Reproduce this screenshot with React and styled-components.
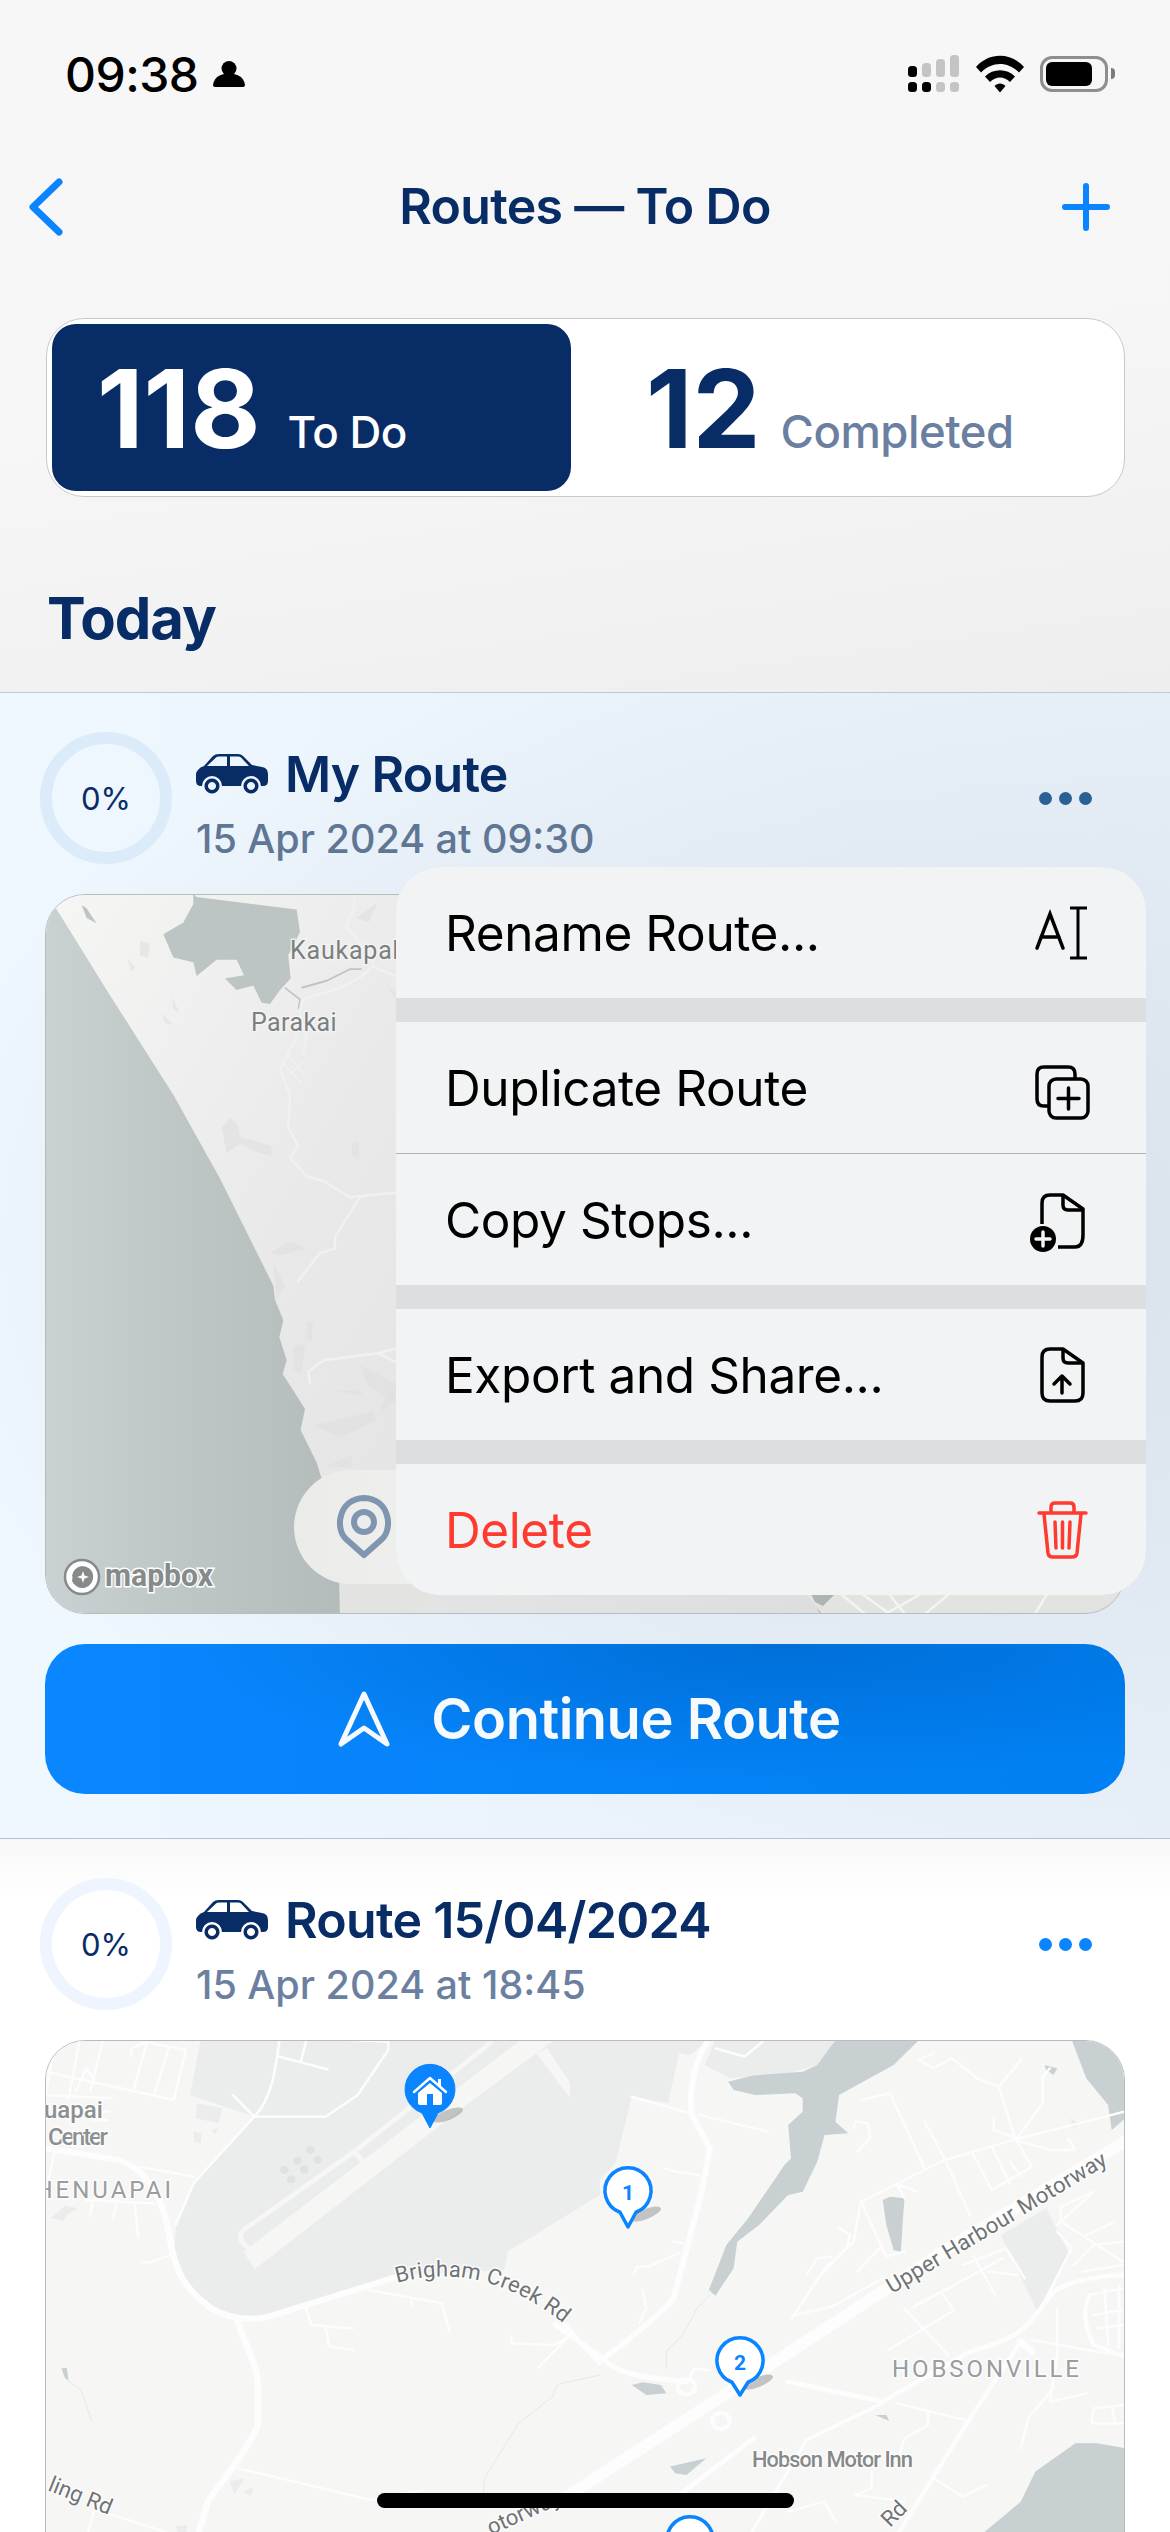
import React from 'react'
import styled, { createGlobalStyle } from 'styled-components'

const NAVY = '#082c66'
const BLUE = '#0a84ff'
const FONT = 'Inter, "Liberation Sans", sans-serif'
const MAP_FONT = 'Roboto, "Liberation Sans", sans-serif'

const GlobalStyle = createGlobalStyle`
  html, body {
    margin: 0;
    padding: 0;
    background: #fff;
  }
  * { box-sizing: border-box; }
`

const Page = styled.div`
  position: relative;
  width: 1170px;
  height: 2532px;
  overflow: hidden;
  font-family: ${FONT};
  background: #fff;
`

const Top = styled.header`
  height: 692px;
  background: linear-gradient(172deg, #f7f7f7 0%, #f6f6f6 55%, #eeeeee 100%);
`

const StatusBar = styled.div`
  height: 148px;
  display: flex;
  align-items: center;
  justify-content: space-between;
  padding: 0 55px 0 65px;
`

const StatusLeft = styled.div`
  display: flex;
  align-items: center;
  gap: 14px;
  font-size: 48px;
  font-weight: 500;
  letter-spacing: -0.5px;
  color: #000;
`

const StatusRight = styled.div`
  display: flex;
  align-items: center;
  gap: 16px;
`

const Battery = styled.div`
  position: relative;
  width: 68px;
  height: 36px;
  padding: 3px;
  border: 3px solid #8e8e8e;
  border-radius: 12px;
  margin-right: 7px;

  &::before {
    content: '';
    display: block;
    width: 46px;
    height: 24px;
    border-radius: 6px;
    background: #000;
  }

  &::after {
    content: '';
    position: absolute;
    right: -10px;
    top: 9px;
    width: 4px;
    height: 11px;
    border-radius: 0 4px 4px 0;
    background: #7a7a7a;
  }
`

const NavBar = styled.nav`
  height: 118px;
  display: grid;
  grid-template-columns: 120px 1fr 88px;
  align-items: center;
  padding: 0 60px 0 28px;
`

const NavTitle = styled.h1`
  margin: 0 0 3px;
  text-align: center;
  font-size: 50px;
  font-weight: 600;
  letter-spacing: -0.7px;
  color: ${NAVY};
`

const NavRight = styled.div`
  display: flex;
  justify-content: flex-end;
`

const Segment = styled.div`
  display: flex;
  width: 1079px;
  height: 179px;
  margin: 52px 0 0 46px;
  padding: 5px;
  background: #fff;
  border: 1px solid #c9c9c9;
  border-radius: 38px;
`

const SegmentItem = styled.div`
  width: ${p => (p.$active ? '519px' : 'auto')};
  flex: ${p => (p.$active ? 'none' : '1')};
  display: flex;
  align-items: baseline;
  gap: ${p => (p.$active ? '27px' : '20px')};
  padding: 0 0 0 ${p => (p.$active ? '45px' : '75px')};
  line-height: 170px;
  border-radius: 24px;
  background: ${p => (p.$active ? NAVY : 'transparent')};
`

const SegmentCount = styled.span`
  font-size: 108px;
  font-weight: 700;
  letter-spacing: 0;
  color: ${p => (p.$active ? '#fff' : NAVY)};
`

const SegmentLabel = styled.span`
  font-size: ${p => (p.$active ? '44px' : '45.5px')};
  font-weight: 500;
  letter-spacing: -0.5px;
  color: ${p => (p.$active ? '#fff' : '#6b7fa0')};
`

const SectionTitle = styled.h2`
  margin: 87px 0 0 47px;
  font-size: 58px;
  line-height: 68px;
  font-weight: 700;
  letter-spacing: -1px;
  color: ${NAVY};
`

const Card = styled.section`
  position: relative;
  padding: 39px 45px 44px;
  border-top: 1px solid ${p => (p.$highlighted ? '#c3c8ce' : '#b9c1d0')};
  background: ${p =>
    p.$highlighted
      ? 'radial-gradient(ellipse 85% 52% at 72% 48%, #d7e0e8 0%, rgba(215,224,232,0) 100%), linear-gradient(90deg, #eff7ff 0%, #e6eef7 100%)'
      : 'linear-gradient(180deg, #f8f8f8 0%, #ffffff 60px)'};
`

const CardHeader = styled.div`
  display: flex;
  align-items: flex-start;
  height: 132px;
`

const Ring = styled.div`
  flex: none;
  width: 132px;
  height: 132px;
  margin-left: -5px;
  display: flex;
  align-items: center;
  justify-content: center;
  border: 12px solid ${p => p.$color};
  border-radius: 50%;
  font-size: 31px;
  color: ${NAVY};
`

const CardTitles = styled.div`
  margin-left: 24px;
  display: flex;
  flex-direction: column;
`

const TitleRow = styled.div`
  display: flex;
  align-items: center;
  gap: 17px;
  height: 60px;
  margin-top: 12px;
`

const CardTitle = styled.h3`
  margin: 0;
  font-size: 50px;
  font-weight: 600;
  letter-spacing: -0.7px;
  color: ${NAVY};
`

const CardDate = styled.div`
  margin-top: 11px;
  font-size: 39.5px;
  line-height: 48px;
  font-weight: 500;
  color: ${p => p.$color};
`

const Dots = styled.div`
  margin: 60px 33px 0 auto;
  display: flex;
  gap: 7px;
`

const Dot = styled.span`
  width: 13px;
  height: 13px;
  border-radius: 50%;
  background: ${p => p.$color};
`

const MapFrame = styled.div`
  position: relative;
  height: ${p => p.$height}px;
  margin-top: 30px;
  overflow: hidden;
  border: 1px solid #b7bcbd;
  border-radius: 40px;

  > svg {
    display: block;
    width: 1080px;
    height: ${p => p.$height}px;
    margin: -1px;
  }
`

const StopsPill = styled.div`
  position: absolute;
  left: 248px;
  top: 575px;
  width: 240px;
  height: 114px;
  display: flex;
  align-items: center;
  padding-left: 42px;
  border-radius: 57px;
  background: linear-gradient(90deg, #ebebea, #f2f2f1);
`

const PrimaryButton = styled.button`
  width: 100%;
  height: 150px;
  margin-top: 30px;
  padding: 0 0 0 8px;
  display: flex;
  align-items: center;
  justify-content: center;
  gap: 40px;
  border: 0;
  border-radius: 40px;
  background:
    radial-gradient(ellipse 55% 90% at 68% 0%, #006fd8 0%, rgba(0, 111, 216, 0) 100%),
    linear-gradient(90deg, #0a86ff 0%, #0080f2 100%);
  color: #f7fafd;
  font-family: ${FONT};
  font-size: 56px;
  font-weight: 600;
  letter-spacing: -0.5px;
`

const Menu = styled.div`
  position: absolute;
  left: 396px;
  top: 174px;
  width: 750px;
  overflow: hidden;
  border-radius: 44px;
  background: #dcdfe0;
`

const MenuRow = styled.div`
  height: ${p => (p.$divided ? '132px' : '131px')};
  margin-top: ${p => (p.$gap ? '24px' : '0')};
  display: flex;
  align-items: center;
  justify-content: space-between;
  padding: 0 52px 0 49px;
  font-size: 49.5px;
  letter-spacing: -0.4px;
  color: ${p => (p.$danger ? '#ff3b30' : '#000')};
  background: #f1f3f5;
  border-bottom: ${p => (p.$divided ? '1px solid #b1b4b6' : '0')};
`

const MenuIcon = styled.svg`
  display: block;
  width: 64px;
  height: 64px;
  flex: none;
`

const HomeBar = styled.div`
  position: absolute;
  left: 377px;
  bottom: 24px;
  width: 417px;
  height: 15px;
  border-radius: 8px;
  background: #000;
`

const MapLabel = styled.text`
  font-family: ${MAP_FONT};
  font-size: ${p => p.$size || 22}px;
  font-weight: ${p => p.$weight || 400};
  letter-spacing: ${p => p.$spacing || 0}px;
  fill: ${p => p.$color || '#85898a'};
  stroke: ${p => p.$halo || 'rgba(255,255,255,0.75)'};
  stroke-width: 3px;
  paint-order: stroke;
`

/* status bar + nav icons */
const PersonIcon = () => (
  <svg width="32" height="26" viewBox="0 0 32 26" fill="#000">
    <circle cx="16" cy="7.5" r="7.5" />
    <path d="M0 24 C1 16 8 12.5 16 12.5 S31 16 32 24 Q32 26 30 26 H2 Q0 26 0 24Z" />
  </svg>
)

const SignalIcon = () => (
  <svg width="52" height="38" viewBox="0 0 52 38">
    <rect x="0" y="11" width="9" height="11" rx="3.5" fill="#000" />
    <rect x="14" y="8" width="9" height="14" rx="3.5" fill="#c4c4c4" />
    <rect x="28" y="4" width="9" height="18" rx="3.5" fill="#c4c4c4" />
    <rect x="42" y="0" width="9" height="22" rx="3.5" fill="#c4c4c4" />
    <rect x="0" y="27" width="9" height="10" rx="3.5" fill="#000" />
    <rect x="14" y="27" width="9" height="10" rx="3.5" fill="#000" />
    <rect x="28" y="27" width="9" height="10" rx="3.5" fill="#c4c4c4" />
    <rect x="42" y="27" width="9" height="10" rx="3.5" fill="#c4c4c4" />
  </svg>
)

const WifiIcon = () => (
  <svg width="48" height="38" viewBox="0 0 48 38">
    <path d="M0 12 C13 -3 35 -3 48 12 L43 17.5 C32 6 16 6 5 17.5Z" />
    <path d="M9 21.5 C17 13 31 13 39 21.5 L34 27 C28 21 20 21 14 27Z" />
    <path d="M18.5 31 C21.5 27.5 26.5 27.5 29.5 31 L24 37.5Z" />
  </svg>
)

const BackIcon = () => (
  <svg width="36" height="58" viewBox="0 0 36 58" fill="none" stroke={BLUE} strokeWidth="7" strokeLinecap="round" strokeLinejoin="round">
    <path d="M31 4 L5 29 L31 54" />
  </svg>
)

const PlusIcon = () => (
  <svg width="48" height="48" viewBox="0 0 48 48" fill="none" stroke={BLUE} strokeWidth="6" strokeLinecap="round">
    <path d="M24 3 V45 M3 24 H45" />
  </svg>
)

const CarIcon = () => (
  <svg width="72" height="40" viewBox="0 0 72 40" fill={NAVY} fillRule="evenodd" style={{ flex: 'none' }}>
    <path d="M2 16 Q4 13 8 12 L17 2 Q19 0 23 0 H42 Q45 0 47 2 L56 11 L66 13 Q72 14 72 20 V27 Q72 32 67 32 H65 A10 10 0 0 0 45 32 H26 A10 10 0 0 0 6 32 H5 Q0 32 0 27 V20 Q0 18 2 16 Z M11 12 L20 3.5 Q21 2.5 23 2.5 H31 V12 Z M34 2.5 H42 Q44 2.5 45 3.5 L53 12 H34 Z" />
    <path d="M16 24.5 a7.5 7.5 0 1 0 0.01 0 Z M16 28 a4 4 0 1 1 -0.01 0 Z M55 24.5 a7.5 7.5 0 1 0 0.01 0 Z M55 28 a4 4 0 1 1 -0.01 0 Z" />
  </svg>
)

const PinIcon = () => (
  <svg width="56" height="64" viewBox="0 0 56 64" fill="none" stroke="#8095b0" strokeWidth="6" style={{ flex: 'none' }}>
    <path d="M28 60 L10 44 C-1 34 2 4 28 3 C54 4 57 34 46 44 Z" strokeLinejoin="round" />
    <circle cx="28" cy="27" r="10" />
  </svg>
)

const NavigateIcon = () => (
  <svg width="54" height="58" viewBox="0 0 54 58" fill="none" stroke="#f7fafd" strokeWidth="5" strokeLinejoin="round">
    <path d="M27 4 L50 54 L27 38 L4 54 Z" />
  </svg>
)

/* context menu icons, 64 box */
const RenameIcon = () => (
  <MenuIcon viewBox="0 0 64 64" fill="none" stroke="#000" strokeWidth="3.5" strokeLinecap="round">
    <path d="M7 47 L20 13 L33 47 M11 36 H29" />
    <path d="M48 7 V57 M40 7 H57 M40 57 H57" strokeLinecap="butt" strokeWidth="3" />
  </MenuIcon>
)

const DuplicateIcon = () => (
  <MenuIcon viewBox="0 0 64 64" fill="none" stroke="#000" strokeWidth="3.5" strokeLinejoin="round">
    <path d="M18 50 H14 Q7 50 7 43 V18 Q7 11 14 11 H38 Q45 11 45 18 V23" />
    <rect x="19" y="23" width="39" height="39" rx="7" />
    <path d="M38.5 32 V53 M28 42.500 H49" strokeLinecap="round" />
  </MenuIcon>
)

const CopyFileIcon = () => (
  <MenuIcon viewBox="0 0 64 64" fill="none" stroke="#000" strokeWidth="3.500" strokeLinejoin="round">
    <path d="M12 36 V15 Q12 7 20 7 H33 L53 21 V47 Q53 59 45 59 H28" />
    <path d="M33 7 V17 Q33 22 38 22 H53" />
    <circle cx="13" cy="51" r="13" fill="#000" stroke="none" />
    <path d="M13 44 V58 M6 51 H20" stroke="#f1f3f5" strokeLinecap="round" />
  </MenuIcon>
)

const ExportIcon = () => (
  <MenuIcon viewBox="0 0 64 64" fill="none" stroke="#000" strokeWidth="3.500" strokeLinejoin="round">
    <path d="M33 6 H20 Q12 6 12 14 V50 Q12 58 20 58 H45 Q53 58 53 50 V20 Z" />
    <path d="M33 6 V15 Q33 20 38 20 H53" />
    <path d="M32 50 V33 M24 41 L32 33 L40 41" strokeLinecap="round" />
  </MenuIcon>
)

const TrashIcon = () => (
  <MenuIcon viewBox="0 0 64 64" fill="none" stroke="#ff3b30" strokeWidth="3.500" strokeLinecap="round" strokeLinejoin="round">
    <path d="M9 15 H56" />
    <path d="M21 14 V9 Q21 5 25 5 H40 Q44 5 44 9 V14" />
    <path d="M14 16 L18 55 Q18.500 59 23 59 H42 Q46.500 59 47 55 L51 16" />
    <path d="M25 24 L26 50 M32.500 24 V50 M40 24 L39 50" />
  </MenuIcon>
)

/* map one: coordinates taken from a 3 x 2.148 grid */
const land1Patches = [
  '300,110 330,115 325,145 300,140',
  '260,145 285,165 275,175',
  '395,230 420,265 400,255',
  '365,265 400,290 375,285',
  '545,510 570,490 595,505 600,530 695,550 695,572 640,560 600,545 560,565',
  '935,545 955,540 958,575 935,570',
  '690,780 750,755 800,770 720,785',
  '700,800 735,850 710,880',
  '800,930 820,925 815,970 800,965',
  '760,980 795,975 785,1040 760,1030',
  '960,1020 1068,1060 1060,1100 985,1065',
  '880,1075 965,1075 965,1085',
  '1020,1110 1068,1060 1068,1095 1030,1120',
  '820,1150 1000,1120 1010,1140 900,1175',
  '1040,205 1068,220 1068,235',
  '950,60 1015,25 985,70',
  '850,1240 935,1215 935,1240'
]

const map1Roads = [
  'M940,12 C955,40 920,65 920,80 C945,100 975,130 1000,155 C1003,170 960,190 900,210 L790,235 L778,270 L800,310 L790,350',
  'M1000,165 L1068,185',
  'M770,315 L720,385 L750,440 L745,510 L775,550 L750,575 L800,615 L850,625 L930,660 L1068,650',
  'M960,660 L885,745 L885,770 L840,780 L775,840',
  'M805,1035 L810,1060 M805,1035 L850,1010 L1015,995 L1068,985 M1015,995 L1068,1015'
]

const RouteMapOne = () => (
  <svg viewBox="0 0 1080 720">
    <defs>
      <linearGradient id="land1" x1="0" y1="0" x2="1" y2="0.4">
        <stop offset="0" stopColor="#f6f6f5" />
        <stop offset="0.35" stopColor="#e8e9e8" />
        <stop offset="1" stopColor="#dcdddc" />
      </linearGradient>
      <linearGradient id="sea1" x1="0" y1="0" x2="1" y2="0">
        <stop offset="0" stopColor="#c9d1d2" />
        <stop offset="0.4" stopColor="#bfc7c7" />
        <stop offset="1" stopColor="#b4bcbb" />
      </linearGradient>
    </defs>
    <rect width="1080" height="720" fill="url(#land1)" />
    <g transform="translate(-5 -4) scale(0.3333 0.4655)">
      {land1Patches.map(p => (
        <polygon key={p} points={p} fill="#dfe0df" opacity="0.6" />
      ))}
      <polygon
        fill="url(#sea1)"
        points="15,0 40,30 200,215 400,440 540,620 700,850 705,880 725,915 730,925 718,960 740,1010 728,1040 760,1075 795,1115 782,1160 830,1230 860,1300 895,1400 900,1560 15,1560"
      />
      <polygon
        fill="#bcc4c4"
        points="460,8 470,15 770,42 780,90 745,140 752,190 720,215 690,245 665,242 640,205 590,215 555,190 612,183 590,150 530,150 470,185 460,155 400,145 370,95 430,70 460,30"
      />
      <polygon fill="#bcc4c4" points="125,32 140,40 170,72 140,60" />
      <path d="M735,210 L780,235 L775,255 M785,210 L860,195 L930,170 L965,170" fill="none" stroke="#bcc4c4" strokeWidth="4" />
      <g fill="none" stroke="#f1f1f0" strokeLinecap="round" strokeLinejoin="round">
        {map1Roads.map(d => (
          <path key={d} d={d} strokeWidth="2.5" vectorEffect="non-scaling-stroke" />
        ))}
        <path d="M725,370 L785,415 M745,355 L790,395 M740,400 L790,370" strokeWidth="1.500" vectorEffect="non-scaling-stroke" />
      </g>
    </g>
    <polygon fill="#adb5b3" points="389,680 1080,680 1080,720 775,720 755,680" />
    <polygon fill="#e3e3e2" points="296,640 400,640 397,695 380,705 372,720 296,720" />
    <polygon fill="#e3e3e2" points="752,690 1080,690 1080,720 777,720" />
    <polygon fill="#e3e3e2" points="458,690 468,690 471,706 464,708" />
    <polygon fill="#e3e3e2" points="668,690 685,690 670,697" />
    <g fill="none" stroke="#f4f4f3" strokeWidth="2.500">
      <path d="M790,695 L820,720 M810,695 L845,720 M840,695 L860,720 M885,695 L840,720 M910,695 L880,720 M960,695 L985,695 M1005,695 L990,720" />
    </g>
    <polygon fill="#adb5b3" points="765,698 778,692 790,700 778,712 770,708" />
    <MapLabel x="245" y="65" $size="25" $spacing="0.8" $color="#7b7f7f" $halo="rgba(245,245,245,0.8)">Kaukapak</MapLabel>
    <MapLabel x="206" y="137" $size="25" $spacing="0.4" $color="#7b7f7f" $halo="rgba(245,245,245,0.8)">Parakai</MapLabel>
    <circle cx="37" cy="683" r="17" fill="#fff" stroke="#858a8a" strokeWidth="2.500" />
    <path d="M37 672 a11 11 0 1 1 -10 15 q1 -5 0 -5 a11 11 0 0 1 10 -10Z" fill="#858a8a" />
    <path d="M38 677 l1.500 4.500 4.500 1.500 -4.500 1.500 -1.500 4.500 -1.500 -4.500 -4.500 -1.500 4.500 -1.500Z" fill="#fff" />
    <MapLabel x="60" y="692" textLength="108" lengthAdjust="spacingAndGlyphs" $size="31" $weight="700" $color="#858a8a" $halo="#fff">mapbox</MapLabel>
  </svg>
)

/* map two, left and right half each on the grid of its crop */
const leftThin = [
  'M40,40 L15,180 M110,20 L80,190 M175,20 L140,170 M300,20 L260,170 M360,40 L320,180 M408,45 L375,195 L15,110',
  'M290,20 L408,45 M255,60 L255,40 L300,20 M130,100 L100,170 M15,180 L200,190 M130,100 L150,130',
  'M670,20 C660,100 650,190 600,245 L540,180 M600,245 H800 L890,180 L975,45 L975,20 L870,15',
  'M670,65 L805,103 M745,20 L730,80',
  'M600,245 L430,445 L380,570 M280,395 L430,425',
  'M140,540 L150,490 M205,550 L215,495 M275,605 L265,510 M130,495 L320,505',
  'M40,350 L25,430 M100,230 L195,230 M150,255 L190,255',
  'M285,682 L310,682 L365,660',
  'M745,820 L760,870 L875,880 M800,880 L810,935 L878,945',
  'M920,765 L1125,805 L1147,890 M1040,790 V815',
  'M1320,905 L1320,925 L1440,930 L1480,905 L1395,998',
  'M555,1300 L925,1395 L1075,1365',
  'M160,1425 L350,1491 M150,1430 L135,1491'
]

const rightThin = [
  'M170,185 L320,232 M355,240 L545,290',
  'M400,40 L480,65 L530,20',
  'M260,400 L290,410 L355,420 M285,620 L310,625 M175,715 L185,695 L215,695 L300,655',
  'M200,765 L210,820 L190,865',
  'M800,500 L1030,375 L1220,315 L1525,230 M800,500 L790,560 L780,620 L700,700 L610,850',
  'M800,195 L880,175 L975,400 M975,260 L1030,370 L1100,540 M790,350 L825,310 L820,265 L785,260 L780,280',
  'M1105,350 L1160,465 L1270,395 L1225,310 M1160,335 L1210,445 M1210,380 L1240,425',
  'M1225,315 L1180,155 L1120,130 L1080,95 L1050,70 L1000,100 L960,75 L1000,55',
  'M1180,155 L1240,75 M1225,315 L1300,205 L1300,125 L1320,100',
  'M1230,310 L1165,285 L1165,250 M1230,310 L1290,295 M1240,320 L1320,345 L1390,345 L1370,310',
  'M800,500 L870,665 L920,650 M860,630 L790,710 M905,450 L955,470 M900,450 L920,490',
  'M650,720 L680,670 L720,665 M740,580 L770,600 L760,640 L690,720',
  'M620,840 L720,815 L860,730',
  'M1080,690 L1200,640 L1250,730 M1110,665 L1170,780 M1150,710 L1230,720 M940,820 L1190,670 M875,945 L1050,830 M920,820 L1040,960 M950,810 L1020,770 L1055,825',
  'M1340,590 L1380,640 L1290,830 M1340,570 L1440,470 L1350,515 L1350,560 L1520,680',
  'M1385,690 L1440,630 L1525,620 M1410,710 L1525,690 M1420,600 L1500,560',
  'M1270,915 L1525,965 M1340,820 L1340,960 L1320,1100 L1420,1075 M1240,1240 L1260,1150 L1330,1060',
  'M1430,780 L1525,760 M1440,840 L1525,825 M1450,880 L1525,870 M1470,760 L1480,930 M1510,750 L1510,940',
  'M1440,1120 L1525,1110 M1435,1165 L1525,1165 M1440,1120 L1435,1165 M1490,1115 L1500,1165',
  'M900,1105 L1085,1155 M985,1130 L985,1170 L920,1210 L905,1260',
  'M830,1310 V1360 L785,1380 L920,1400 M1000,1330 L1080,1385 L1145,1350',
  'M380,1005 L340,1000 L330,1030 M600,1430 L700,1400 L730,1460'
]

const MapPin = ({ x, y, tip, r, filled, children }) => (
  <g>
    <ellipse cx={x + 18} cy={tip - 13} rx="16" ry="5" fill="#8d8f8f" opacity="0.5" transform={`rotate(-22 ${x + 18} ${tip - 13})`} />
    <path
      d={`M${x} ${tip} L${x - 8} ${y + r * 0.88} A${r} ${r} 0 1 1 ${x + 8} ${y + r * 0.88} Z`}
      fill={filled ? BLUE : '#fff'}
      stroke={BLUE}
      strokeWidth={filled ? 1 : 3.5}
      strokeLinejoin="round"
    />
    {children}
  </g>
)

const PinNumber = styled.text`
  font-family: ${MAP_FONT};
  font-size: 21px;
  font-weight: 700;
  fill: ${BLUE};
  text-anchor: middle;
`

const RouteMapTwo = () => (
  <svg viewBox="0 0 1080 532">
    <rect width="1080" height="532" fill="#f6f6f5" />
    <g transform="translate(-5 -5) scale(0.3571 0.3333)">
      <polygon
        fill="#ebeded"
        points="450,15 1568,15 1568,480 1310,650 1300,705 1000,720 640,840 560,845 470,815 400,740 375,680 380,570 440,430 600,245 420,180"
      />
      <polygon fill="#f6f6f5" points="570,650 1345,15 1440,15 1200,205 602,702" />
      <polygon fill="#f6f6f5" points="1390,55 1420,40 1560,265 1545,275" />
      <path d="M585,640 C550,615 555,590 590,570 L880,350 L1010,240 L1265,20" fill="none" stroke="#f6f6f5" strokeWidth="14" />
      <path d="M880,350 L905,380" fill="none" stroke="#f6f6f5" strokeWidth="14" />
      <g fill="#e0e2e2">
        <circle cx="757" cy="345" r="12" />
        <circle cx="778" cy="375" r="12" />
        <circle cx="721" cy="377" r="12" />
        <circle cx="740" cy="403" r="12" />
        <circle cx="684" cy="405" r="12" />
        <circle cx="703" cy="433" r="12" />
      </g>
      <g fill="#ebeded">
        <polygon points="440,205 510,220 500,265 435,250" />
        <polygon points="430,290 452,295 450,325 432,322" />
        <polygon points="480,285 500,280 490,300" />
        <polygon points="30,550 70,512 108,520 80,535 65,558" />
        <polygon points="440,445 490,465 470,505 420,510" />
        <polygon points="530,1340 572,1330 545,1380" />
        <polygon points="570,1370 600,1355 590,1385" />
        <polygon points="380,1475 412,1470 410,1491 385,1491" />
      </g>
      <polygon fill="#c8d0d2" points="60,1000 75,998 80,1035 70,1030" />
      <path d="M75,1035 L115,1065 L145,1160 M1240,1390 L1245,1330 L1340,1165 L1435,1085 L1450,1048 L1568,1020" fill="none" stroke="#dfe1e1" strokeWidth="2" />
      <g fill="none" stroke="#fdfdfd" strokeLinecap="round" strokeLinejoin="round">
        {leftThin.map(d => (
          <path key={d} d={d} strokeWidth="7" />
        ))}
        <path d="M15,340 L220,375 C290,400 340,470 360,590 C375,700 400,760 480,820 C530,850 580,860 640,845 L1010,722" strokeWidth="18" />
        <path d="M550,850 C570,920 610,990 610,1050 L610,1170 C600,1220 480,1380 470,1400 L445,1491" strokeWidth="18" />
        <path d="M1470,870 L1568,985" strokeWidth="13" />
      </g>
    </g>
    <g transform="translate(525 -5) scale(0.3636 0.3333)">
      <polygon fill="#ebeded" points="0,15 380,15 330,60 300,55 270,205 170,185 125,385 0,530" />
      <polygon fill="#ebeded" points="400,15 730,15 680,90 600,115 440,130 370,90" />
      <polygon fill="#ebeded" points="1185,600 1310,520 1375,660 1285,830" />
      <polygon fill="#ebeded" points="1375,250 1400,265 1385,280" />
      <polygon
        fill="#c8d0d2"
        points="435,140 500,122 640,110 680,90 730,15 960,15 890,90 740,180 730,260 765,295 700,300 680,380 640,470 600,480 520,570 460,620 450,700 400,782 382,765 430,630 490,550 590,390 608,370 600,270 640,230 640,190 620,175 510,180 450,165"
      />
      <polygon fill="#c8d0d2" points="1380,15 1460,15 1527,60 1527,250 1490,285 1480,210 1420,130" />
      <polygon fill="#c8d0d2" points="1527,1240 1450,1225 1390,1225 1280,1310 1240,1400 1140,1491 1527,1491" />
      <polygon fill="#c8d0d2" points="860,495 880,485 920,490 915,560 910,650 890,645 870,570" />
      <polygon fill="#c8d0d2" points="170,1050 200,1042 250,1050 265,1075 210,1080" />
      <polygon fill="#c8d0d2" points="275,1295 375,1270 320,1320 290,1315" />
      <polygon fill="#c8d0d2" points="840,1140 870,1140 878,1158" />
      <polygon fill="#c8d0d2" points="1305,90 1340,100 1330,120 1310,105" />
      <path d="M385,780 L350,820 L310,900 L265,950 L265,1000" fill="none" stroke="#dfe1e1" strokeWidth="2" />
      <g fill="none" stroke="#fdfdfd" strokeLinecap="round" strokeLinejoin="round">
        {rightThin.map(d => (
          <path key={d} d={d} strokeWidth="7" />
        ))}
        <path d="M375,25 C330,100 325,230 340,250 L385,340 L360,480 L285,790 C270,820 110,960 90,970" strokeWidth="16" />
        <path d="M-40,870 L90,970 C130,1020 220,1030 320,1040" strokeWidth="16" />
        <path d="M-30,1400 L480,1040 L1040,640 L1540,310" strokeWidth="34" />
        <path d="M600,1040 L860,1100 L1100,950 C1260,900 1250,880 1330,770 C1370,740 1430,725 1527,720" strokeWidth="14" />
        <path d="M1240,920 L1100,1150 L905,1491" strokeWidth="12" />
        <path d="M860,1105 L650,1215 L500,1491" strokeWidth="10" />
        <path d="M505,1210 L300,1380" strokeWidth="14" />
        <path d="M1270,950 L1240,920" strokeWidth="20" />
        <circle cx="320" cy="1055" r="24" strokeWidth="12" />
        <circle cx="415" cy="1158" r="24" strokeWidth="12" />
        <path d="M1430,780 Q1400,840 1440,930 L1527,965" strokeWidth="12" />
      </g>
    </g>

    <MapLabel x="-1" y="78" $size="24" $color="#8c9091" $weight="500">uapai</MapLabel>
    <MapLabel x="3" y="105" textLength="60" $size="24" $color="#8c9091" $weight="500">Center</MapLabel>
    <MapLabel x="129" y="158" textAnchor="end" $size="24" $spacing="3" $color="#9a9d9e">HENUAPAI</MapLabel>
    <path id="brigham" d="M352 243 Q440 218 524 288" fill="none" />
    <MapLabel $size="22" $spacing="0.200" $color="#6f7374">
      <textPath href="#brigham">Brigham Creek Rd</textPath>
    </MapLabel>
    <MapLabel transform="translate(847 254) rotate(-31)" $size="22" $spacing="0.300" $color="#6f7374">Upper Harbour Motorway</MapLabel>
    <MapLabel x="847" y="337" textLength="187" $size="24" $color="#9a9d9e">HOBSONVILLE</MapLabel>
    <MapLabel x="707" y="427" textLength="161" $size="22" $weight="500" $color="#85898a">Hobson Motor Inn</MapLabel>
    <MapLabel transform="translate(2 450) rotate(22)" $size="22" $color="#6f7374">ling Rd</MapLabel>
    <MapLabel transform="translate(845 488) rotate(-45)" $size="22" $color="#6f7374">Rd</MapLabel>
    <MapLabel transform="translate(446 495) rotate(-24)" $size="22" $color="#6f7374">otorway</MapLabel>

    <MapPin x={385} y={51} tip={88} r={25} filled>
      <path d="M369 52 L385 38 L401 52" fill="none" stroke="#fff" strokeWidth="2.500" strokeLinecap="round" strokeLinejoin="round" />
      <path d="M373 53 L385 43 L397 53 V63 Q397 65 395 65 H375 Q373 65 373 63Z" fill="#fff" />
      <rect x="382" y="54" width="6" height="11" fill={BLUE} />
      <rect x="393" y="39" width="3" height="8" fill="#fff" />
    </MapPin>
    <MapPin x={583} y={152} tip={187} r={23}>
      <PinNumber x={583} y={160}>1</PinNumber>
    </MapPin>
    <MapPin x={695} y={322} tip={355} r={23}>
      <PinNumber x={695} y={330}>2</PinNumber>
    </MapPin>
    <MapPin x={645} y={501} tip={540} r={23} />
  </svg>
)

const routes = [
  {
    title: 'My Route',
    date: '15 Apr 2024 at 09:30',
    highlighted: true,
    ring: '#dcebfa',
    dateColor: '#5f7694',
    dots: '#2a6194',
    mapHeight: 720
  },
  {
    title: 'Route 15/04/2024',
    date: '15 Apr 2024 at 18:45',
    highlighted: false,
    ring: '#eef5fe',
    dateColor: '#6b7fa0',
    dots: BLUE,
    mapHeight: 532
  }
]

const menuItems = [
  { label: 'Rename Route...', icon: <RenameIcon /> },
  { label: 'Duplicate Route', icon: <DuplicateIcon />, gap: true, divided: true },
  { label: 'Copy Stops...', icon: <CopyFileIcon /> },
  { label: 'Export and Share...', icon: <ExportIcon />, gap: true },
  { label: 'Delete', icon: <TrashIcon />, gap: true, danger: true }
]

const RouteCard = ({ route }) => (
  <Card $highlighted={route.highlighted}>
    <CardHeader>
      <Ring $color={route.ring}>0%</Ring>
      <CardTitles>
        <TitleRow>
          <CarIcon />
          <CardTitle>{route.title}</CardTitle>
        </TitleRow>
        <CardDate $color={route.dateColor}>{route.date}</CardDate>
      </CardTitles>
      <Dots>
        <Dot $color={route.dots} />
        <Dot $color={route.dots} />
        <Dot $color={route.dots} />
      </Dots>
    </CardHeader>
    <MapFrame $height={route.mapHeight}>
      {route.highlighted ? <RouteMapOne /> : <RouteMapTwo />}
      {route.highlighted && (
        <StopsPill>
          <PinIcon />
        </StopsPill>
      )}
    </MapFrame>
    {route.highlighted && (
      <PrimaryButton>
        <NavigateIcon />
        Continue Route
      </PrimaryButton>
    )}
    {route.highlighted && (
      <Menu>
        {menuItems.map(item => (
          <MenuRow key={item.label} $gap={item.gap} $divided={item.divided} $danger={item.danger}>
            {item.label}
            {item.icon}
          </MenuRow>
        ))}
      </Menu>
    )}
  </Card>
)

export default function App() {
  return (
    <Page>
      <GlobalStyle />
      <Top>
        <StatusBar>
          <StatusLeft>
            09:38
            <PersonIcon />
          </StatusLeft>
          <StatusRight>
            <SignalIcon />
            <WifiIcon />
            <Battery />
          </StatusRight>
        </StatusBar>
        <NavBar>
          <BackIcon />
          <NavTitle>Routes — To Do</NavTitle>
          <NavRight>
            <PlusIcon />
          </NavRight>
        </NavBar>
        <Segment>
          <SegmentItem $active>
            <SegmentCount $active>118</SegmentCount>
            <SegmentLabel $active>To Do</SegmentLabel>
          </SegmentItem>
          <SegmentItem>
            <SegmentCount>12</SegmentCount>
            <SegmentLabel>Completed</SegmentLabel>
          </SegmentItem>
        </Segment>
        <SectionTitle>Today</SectionTitle>
      </Top>
      {routes.map(route => (
        <RouteCard key={route.title} route={route} />
      ))}
      <HomeBar />
    </Page>
  )
}
